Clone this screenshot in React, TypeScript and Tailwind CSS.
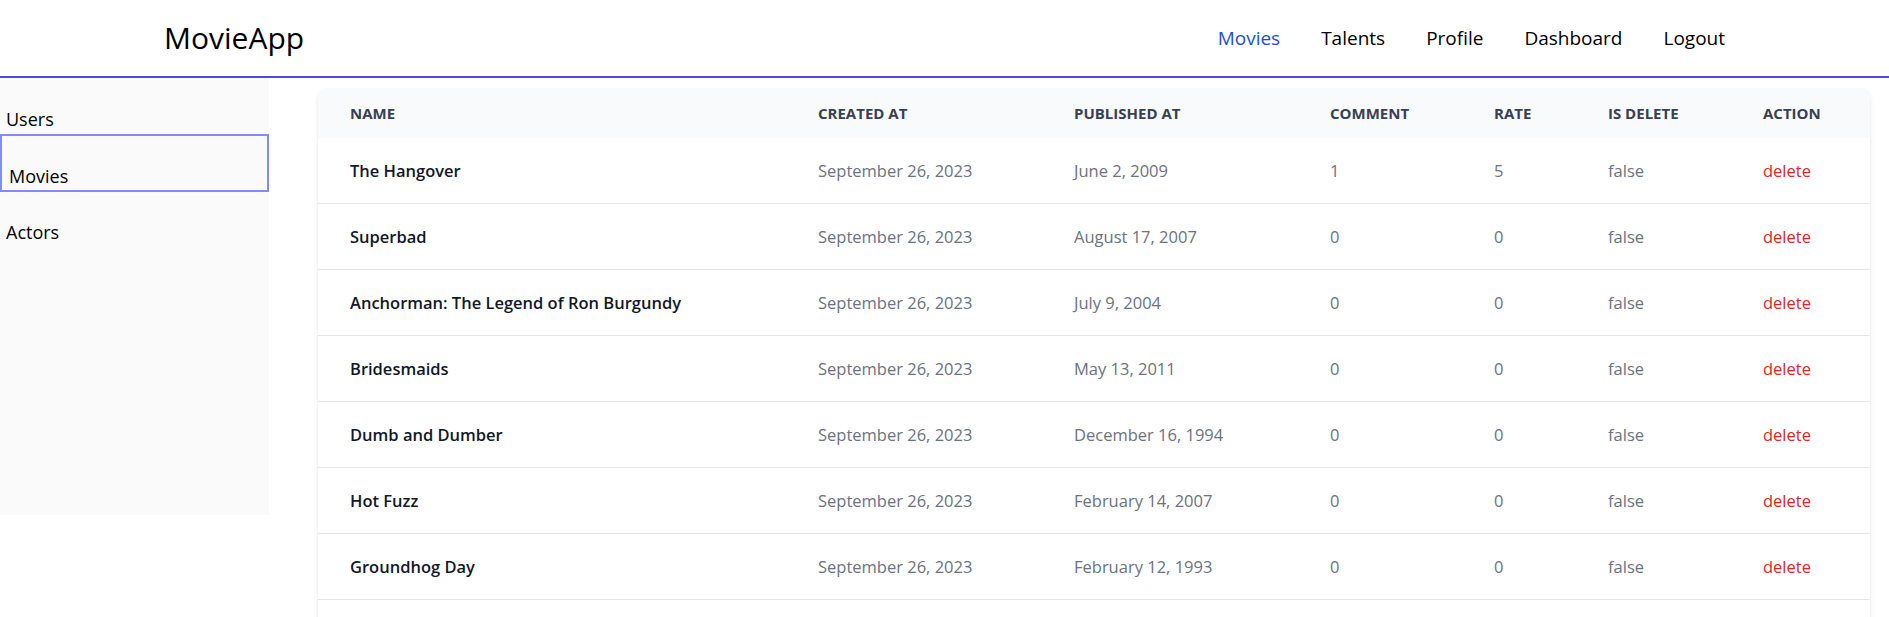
import React from 'react'

type Movie = {
  name: string
  createdAt: string
  publishedAt: string
  comment: number
  rate: number
  isDelete: boolean
}

const movies: Movie[] = [
  { name: 'The Hangover', createdAt: 'September 26, 2023', publishedAt: 'June 2, 2009', comment: 1, rate: 5, isDelete: false },
  { name: 'Superbad', createdAt: 'September 26, 2023', publishedAt: 'August 17, 2007', comment: 0, rate: 0, isDelete: false },
  { name: 'Anchorman: The Legend of Ron Burgundy', createdAt: 'September 26, 2023', publishedAt: 'July 9, 2004', comment: 0, rate: 0, isDelete: false },
  { name: 'Bridesmaids', createdAt: 'September 26, 2023', publishedAt: 'May 13, 2011', comment: 0, rate: 0, isDelete: false },
  { name: 'Dumb and Dumber', createdAt: 'September 26, 2023', publishedAt: 'December 16, 1994', comment: 0, rate: 0, isDelete: false },
  { name: 'Hot Fuzz', createdAt: 'September 26, 2023', publishedAt: 'February 14, 2007', comment: 0, rate: 0, isDelete: false },
  { name: 'Groundhog Day', createdAt: 'September 26, 2023', publishedAt: 'February 12, 1993', comment: 0, rate: 0, isDelete: false },
  { name: 'Step Brothers', createdAt: 'September 26, 2023', publishedAt: 'July 25, 2008', comment: 0, rate: 0, isDelete: false },
]

const navLinks = ['Movies', 'Talents', 'Profile', 'Dashboard', 'Logout']

function Header() {
  return (
    <header className="h-[78px] border-b-2 border-[#4f46e5] bg-white">
      <div className="flex h-[76px] items-center justify-between px-[164px]">
        <a className="text-[30px] leading-[36px] text-black">MovieApp</a>
        <nav className="flex items-center gap-[41px]">
          {navLinks.map((link) => (
            <a
              key={link}
              className={
                'text-[19px] leading-[28px] ' +
                (link === 'Movies' ? 'text-[#1d4ed8]' : 'text-black')
              }
            >
              {link}
            </a>
          ))}
        </nav>
      </div>
    </header>
  )
}

function Sidebar() {
  return (
    <aside className="h-[437px] w-[269px] shrink-0 bg-[#fafafa] pt-[27px] text-[18px] leading-[28px] text-black">
      <div className="pl-[6px]">Users</div>
      {/* Elemento activo */}
      <div className="mt-px h-[58px] border-2 border-[#818cf8] pl-[7px] pt-[26px]">Movies</div>
      <div className="mt-[26px] pl-[6px]">Actors</div>
    </aside>
  )
}

function MoviesTable() {
  const headers = ['Name', 'Created At', 'Published At', 'Comment', 'Rate', 'Is Delete', 'Action']

  return (
    <div className="overflow-hidden rounded-lg bg-white shadow-md">
      <table className="w-full table-fixed border-collapse text-left">
        <colgroup>
          <col className="w-[468px]" />
          <col className="w-[256px]" />
          <col className="w-[256px]" />
          <col className="w-[164px]" />
          <col className="w-[114px]" />
          <col className="w-[155px]" />
          <col />
        </colgroup>
        <thead className="bg-[#f9fafb]">
          <tr>
            {headers.map((h) => (
              <th
                key={h}
                className="py-[13px] pl-[32px] text-[15px] font-bold uppercase leading-[24px] text-[#374151]"
              >
                {h}
              </th>
            ))}
          </tr>
        </thead>
        <tbody className="divide-y divide-[#e5e7eb]">
          {movies.map((m) => (
            <tr key={m.name}>
              <td className="py-[20px] pl-[32px] text-[16.5px] font-semibold leading-[25px] text-[#111827] whitespace-nowrap">
                {m.name}
              </td>
              <td className="py-[20px] pl-[32px] text-[16.5px] leading-[25px] text-[#6b7280] whitespace-nowrap">
                {m.createdAt}
              </td>
              <td className="py-[20px] pl-[32px] text-[16.5px] leading-[25px] text-[#6b7280] whitespace-nowrap">
                {m.publishedAt}
              </td>
              <td className="py-[20px] pl-[32px] text-[16.5px] leading-[25px] text-[#6b7280]">{m.comment}</td>
              <td className="py-[20px] pl-[32px] text-[16.5px] leading-[25px] text-[#6b7280]">{m.rate}</td>
              <td className="py-[20px] pl-[32px] text-[16.5px] leading-[25px] text-[#6b7280]">
                {m.isDelete ? 'true' : 'false'}
              </td>
              <td className="py-[20px] pl-[32px] text-[16.5px] leading-[25px]">
                <button className="text-[#dc2626]">delete</button>
              </td>
            </tr>
          ))}
        </tbody>
      </table>
    </div>
  )
}

export default function App() {
  return (
    <div className="min-h-screen bg-white font-['Open_Sans',sans-serif]">
      <Header />
      <div className="flex">
        <Sidebar />
        <main className="flex-1 pl-[49px] pr-[19px] pt-[10px]">
          <MoviesTable />
        </main>
      </div>
    </div>
  )
}
